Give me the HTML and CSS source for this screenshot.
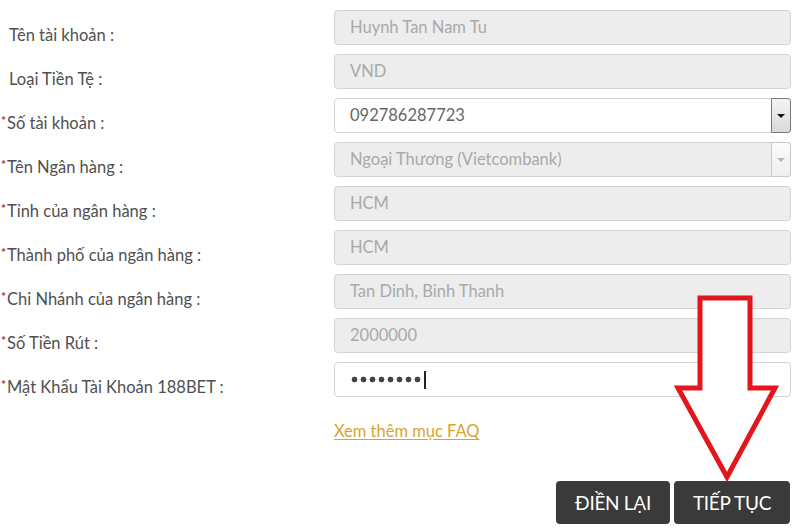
FILE: index.html
```html
<!DOCTYPE html>
<html lang="vi">
<head>
<meta charset="utf-8">
<title>Rút tiền</title>
<link rel="stylesheet" href="styles.css">
</head>
<body>
<div class="page">
  <div class="form">
    <div class="label">Tên tài khoản :</div>
    <div class="field disabled">Huynh Tan Nam Tu</div>

    <div class="label">Loại Tiền Tệ :</div>
    <div class="field disabled">VND</div>

    <div class="label req"><span class="star">*</span>Số tài khoản :</div>
    <div class="field active select">
      <span class="value">092786287723</span>
      <span class="drop"><span class="tri"></span></span>
    </div>

    <div class="label req"><span class="star">*</span>Tên Ngân hàng :</div>
    <div class="field disabled select">
      <span class="value">Ngoại Thương (Vietcombank)</span>
      <span class="drop drop-off"><span class="tri"></span></span>
    </div>

    <div class="label req"><span class="star">*</span>Tỉnh của ngân hàng :</div>
    <div class="field disabled">HCM</div>

    <div class="label req"><span class="star">*</span>Thành phố của ngân hàng :</div>
    <div class="field disabled">HCM</div>

    <div class="label req"><span class="star">*</span>Chi Nhánh của ngân hàng :</div>
    <div class="field disabled">Tan Dinh, Binh Thanh</div>

    <div class="label req"><span class="star">*</span>Số Tiền Rút :</div>
    <div class="field disabled">2000000</div>

    <div class="label req"><span class="star">*</span>Mật Khẩu Tài Khoản 188BET :</div>
    <div class="field active password"><span class="dots"></span><span class="caret"></span></div>
  </div>

  <div class="faq"><a href="#" class="faq-link">Xem thêm mục FAQ</a></div>

  <div class="actions">
    <button class="btn">ĐIỀN LẠI</button>
    <button class="btn">TIẾP TỤC</button>
  </div>

  <svg class="arrow" width="120" height="200" viewBox="0 0 120 200">
    <polygon points="28,6 78,6 78,96 103,96 55,185 6,96 28,96" fill="#fff" stroke="#e3161e" stroke-width="5" stroke-linejoin="miter"/>
  </svg>
</div>
</body>
</html>
```

FILE: styles.css
```css
* { box-sizing: border-box; }
html, body { margin: 0; padding: 0; background: #fff; }
body {
  font-family: Lato, "Noto Sans", "Liberation Sans", sans-serif;
  width: 800px;
  height: 530px;
  overflow: hidden;
}
.page {
  position: relative;
  width: 800px;
  height: 530px;
  padding-top: 10px;
}
.form {
  display: grid;
  grid-template-columns: 334px 457px;
  row-gap: 9px;
}
.label {
  font-size: 16.5px;
  line-height: 20px;
  color: #505050;
  padding-top: 15px;
  padding-left: 9px;
  white-space: nowrap;
}
.label.req { padding-left: 1px; }
.star {
  display: inline-block;
  width: 6px;
  color: #c8243e;
  font-size: 12px;
  font-weight: 700;
  vertical-align: 4px;
  line-height: 10px;
}
.field {
  height: 35px;
  border: 1px solid #d3d3d3;
  border-radius: 4px;
  padding-left: 15px;
  font-size: 16.5px;
  line-height: 33px;
  display: flex;
  align-items: center;
  white-space: nowrap;
}
.field.disabled { background: #ededed; color: #a9a9a9; }
.field.active { background: #fff; color: #666; }
.field.select { padding-right: 0; }
.value { flex: 1; }
.drop {
  width: 20px;
  height: 35px;
  margin-top: -1px;
  margin-bottom: -1px;
  margin-right: -1px;
  border: 1px solid #7a7a7a;
  border-radius: 0 3px 3px 0;
  background: linear-gradient(#f4f4f4, #d9d9d9);
  display: flex;
  align-items: center;
  justify-content: center;
}
.tri {
  width: 0;
  height: 0;
  border-left: 4px solid transparent;
  border-right: 4px solid transparent;
  border-top: 4px solid #111;
}
.drop-off {
  border-color: #c9c9c9;
  background: linear-gradient(#fbfbfb, #efefef);
}
.drop-off .tri { border-top-color: #b5b5b5; }
.password { padding-left: 16px; }
.dots {
  display: inline-block;
  width: 72px;
  height: 7px;
  background: radial-gradient(circle at 3.5px 3.5px, #444 2.6px, transparent 3.2px) 0 0 / 9px 7px repeat-x;
}
.caret {
  display: inline-block;
  width: 2px;
  height: 18px;
  background: #222;
  margin-left: 1px;
}
.faq {
  margin-top: 24px;
  padding-left: 334px;
  font-size: 16.5px;
  line-height: 20px;
}
.faq-link {
  color: #d9a431;
  text-decoration: underline;
  text-underline-offset: 2px;
}
.actions {
  display: flex;
  justify-content: flex-end;
  gap: 4px;
  padding-right: 10px;
  margin-top: 40px;
}
.btn {
  font-family: Lato, "Noto Sans", "Liberation Sans", sans-serif;
  font-size: 19px;
  color: #fff;
  background: #3a3a3a;
  border: none;
  border-radius: 4px;
  height: 43px;
  padding: 0;
  width: 114px;
  letter-spacing: -0.3px;
}
.btn + .btn { width: 116px; }
.arrow {
  position: absolute;
  left: 672px;
  top: 292px;
}
```
